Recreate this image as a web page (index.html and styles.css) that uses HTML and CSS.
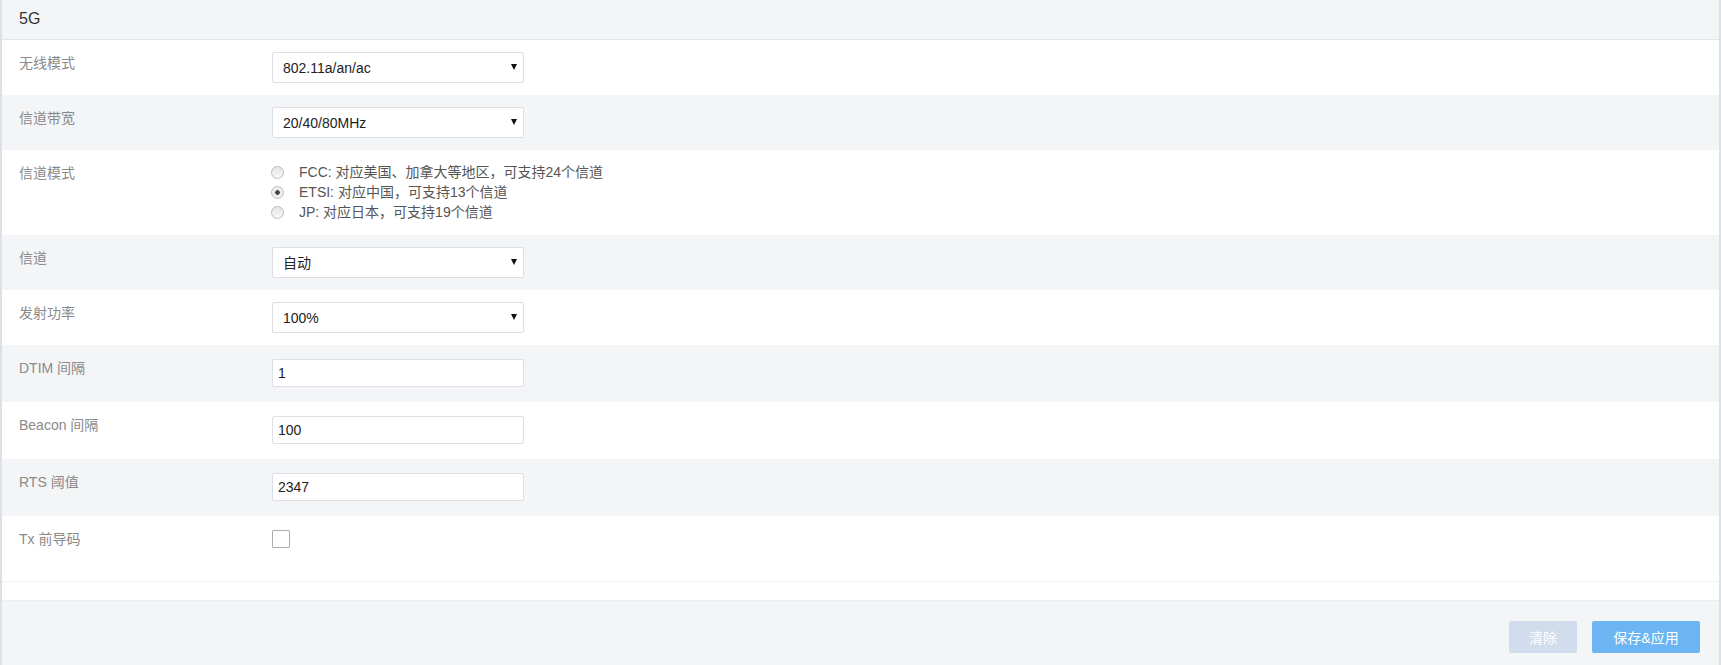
FILE: index.html
```html
<!DOCTYPE html>
<html lang="zh-CN">
<head>
    <meta charset="UTF-8">
    <meta name="viewport" content="width=device-width, initial-scale=1.0">
    <title>5G 无线设置</title>
    <link rel="stylesheet" href="styles.css">
</head>
<body>
    <div class="panel">
        <div class="panel-head">5G</div>

        <form class="form" id="wifiForm">
            <div class="row">
                <label class="label">无线模式</label>
                <div class="control">
                    <div class="select-wrap">
                        <select class="select" name="mode">
                            <option>802.11a/an/ac</option>
                            <option>802.11a/an</option>
                        </select>
                    </div>
                </div>
            </div>

            <div class="row row-alt">
                <label class="label">信道带宽</label>
                <div class="control">
                    <div class="select-wrap">
                        <select class="select" name="bandwidth">
                            <option>20/40/80MHz</option>
                            <option>20/40MHz</option>
                            <option>20MHz</option>
                        </select>
                    </div>
                </div>
            </div>

            <div class="row row-radio">
                <label class="label">信道模式</label>
                <div class="control radio-group">
                    <label class="radio-item"><input type="radio" name="region" class="radio"> FCC: 对应美国、加拿大等地区，可支持24个信道</label>
                    <label class="radio-item"><input type="radio" name="region" class="radio" checked> ETSI: 对应中国，可支持13个信道</label>
                    <label class="radio-item"><input type="radio" name="region" class="radio"> JP: 对应日本，可支持19个信道</label>
                </div>
            </div>

            <div class="row row-alt">
                <label class="label">信道</label>
                <div class="control">
                    <div class="select-wrap">
                        <select class="select" name="channel">
                            <option>自动</option>
                        </select>
                    </div>
                </div>
            </div>

            <div class="row">
                <label class="label">发射功率</label>
                <div class="control">
                    <div class="select-wrap">
                        <select class="select" name="power">
                            <option>100%</option>
                            <option>75%</option>
                            <option>50%</option>
                        </select>
                    </div>
                </div>
            </div>

            <div class="row row-alt">
                <label class="label">DTIM 间隔</label>
                <div class="control">
                    <input type="text" class="text-input" name="dtim" value="1">
                </div>
            </div>

            <div class="row">
                <label class="label">Beacon 间隔</label>
                <div class="control">
                    <input type="text" class="text-input" name="beacon" value="100">
                </div>
            </div>

            <div class="row row-alt">
                <label class="label">RTS 阈值</label>
                <div class="control">
                    <input type="text" class="text-input" name="rts" value="2347">
                </div>
            </div>

            <div class="row row-check">
                <label class="label">Tx 前导码</label>
                <div class="control">
                    <input type="checkbox" class="checkbox" name="preamble">
                </div>
            </div>

            <div class="spacer"></div>
        </form>

        <div class="panel-foot">
            <button type="button" class="btn btn-clear">清除</button>
            <button type="button" class="btn btn-save">保存&amp;应用</button>
        </div>
    </div>
</body>
</html>
```

FILE: styles.css
```css
html, body {
    margin: 0;
    padding: 0;
    height: 100%;
}

body {
    font-family: "Liberation Sans", "Noto Sans CJK SC", sans-serif;
    font-size: 14px;
    background-color: #f4f5f7;
    color: #333;
}

.panel {
    box-sizing: border-box;
    min-height: 100%;
    border-left: 2px solid #dde0e6;
    border-right: 2px solid #dde0e6;
    background-color: #f4f5f7;
}

.panel-head {
    height: 39px;
    line-height: 37px;
    padding-left: 17px;
    font-size: 16px;
    color: #333;
    border-bottom: 1px solid #e3e5e9;
}

.form {
    margin: 0;
    background-color: #fff;
}

.row {
    display: flex;
    align-items: flex-start;
    padding: 12px 17px;
    background-color: #fff;
}

.row-alt {
    background-color: #f4f5f7;
}

.label {
    width: 253px;
    flex-shrink: 0;
    margin-top: 1px;
    line-height: 20px;
    color: #8a8a8a;
}

.control {
    flex: 1;
}

/* select */
.select-wrap {
    position: relative;
    width: 252px;
}

.select-wrap::after {
    content: "";
    position: absolute;
    right: 7px;
    top: 12px;
    border-left: 3px solid transparent;
    border-right: 3px solid transparent;
    border-top: 6px solid #111;
    pointer-events: none;
}

.select {
    display: block;
    box-sizing: border-box;
    width: 100%;
    height: 31px;
    padding: 0 10px;
    font-family: inherit;
    font-size: 14px;
    color: #222;
    background-color: #fff;
    border: 1px solid #dcdfe6;
    border-radius: 2px;
    appearance: none;
    -webkit-appearance: none;
    outline: none;
}

/* text inputs */
.text-input {
    display: block;
    box-sizing: border-box;
    width: 252px;
    height: 28px;
    margin: 2px 0 3px;
    padding: 0 5px;
    font-family: inherit;
    font-size: 14px;
    color: #222;
    background-color: #fff;
    border: 1px solid #dcdfe6;
    border-radius: 2px;
    outline: none;
}

/* radios */
.row-radio {
    padding-bottom: 13px;
}

.radio-group {
    display: flex;
    flex-direction: column;
}

.radio-item {
    display: flex;
    align-items: center;
    height: 20px;
    line-height: 20px;
    color: #555;
    white-space: nowrap;
}

.radio {
    appearance: none;
    -webkit-appearance: none;
    box-sizing: border-box;
    width: 13px;
    height: 13px;
    margin: 0 15px 0 -1px;
    border: 1px solid #bdbdbd;
    border-radius: 50%;
    background: linear-gradient(#e4e4e4, #f8f8f8);
}

.radio:checked {
    background: radial-gradient(circle, #444 0, #444 2px, #e8e8e8 2.5px, #f8f8f8 100%);
}

/* checkbox */
.row-check {
    padding-bottom: 32px;
    border-bottom: 1px solid #f0f1f3;
}

.checkbox {
    appearance: none;
    -webkit-appearance: none;
    display: block;
    box-sizing: border-box;
    width: 18px;
    height: 18px;
    margin: 2px 0 0;
    border: 1px solid #a9adb4;
    border-radius: 1px;
    background-color: #fff;
}

.spacer {
    height: 18px;
    background-color: #fff;
}

/* footer */
.panel-foot {
    display: flex;
    justify-content: flex-end;
    gap: 15px;
    padding: 20px 19px 13px;
    border-top: 1px solid #eceef1;
}

.btn {
    height: 32px;
    border: none;
    border-radius: 2px;
    color: #fff;
    font-family: inherit;
    font-size: 14px;
    cursor: pointer;
}

.btn-clear {
    width: 68px;
    background-color: #d1dcec;
}

.btn-save {
    width: 108px;
    background-color: #6ab5f2;
}

.btn-save:hover {
    background-color: #5aa9ea;
}
```
